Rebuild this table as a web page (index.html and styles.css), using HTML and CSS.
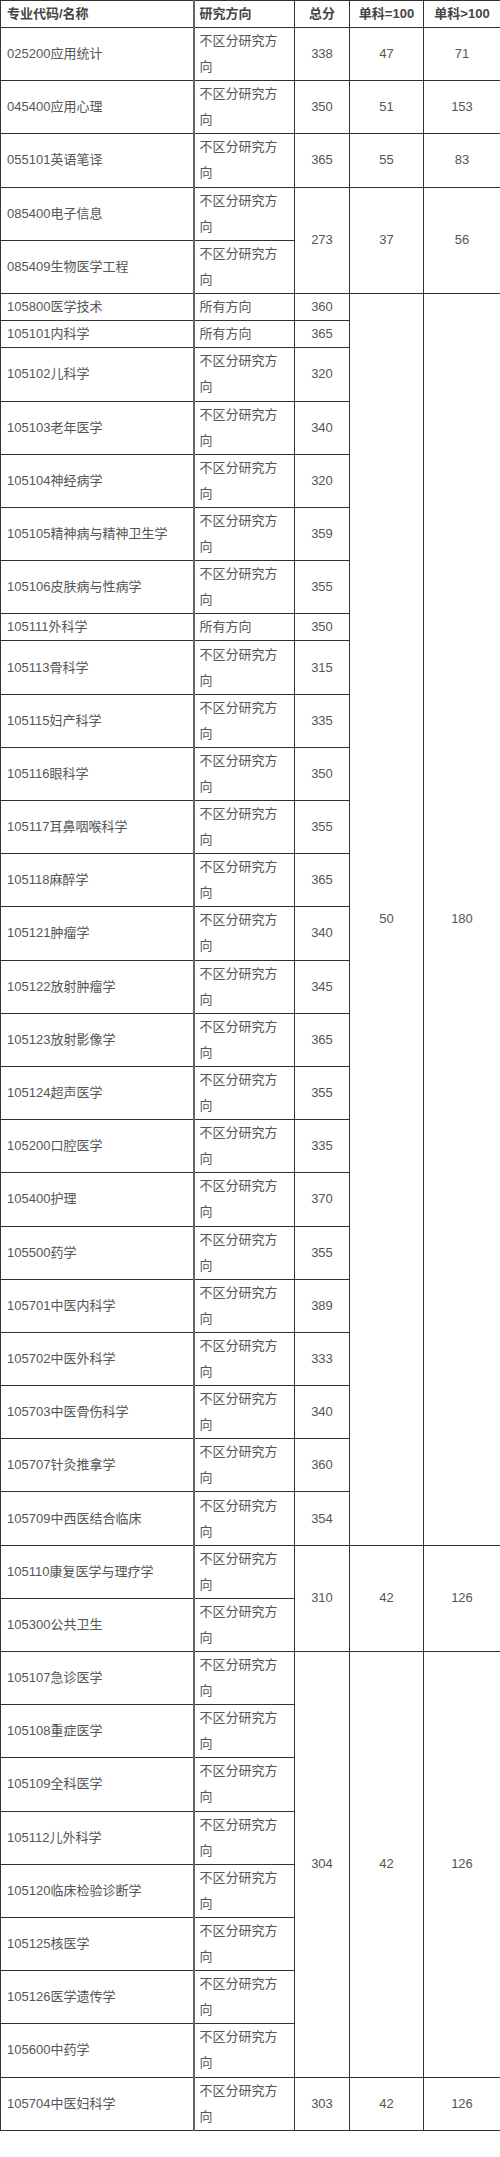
FILE: index.html
```html
<!DOCTYPE html>
<html lang="zh-CN">
<head>
<meta charset="utf-8">
<title>分数线</title>
<link rel="stylesheet" href="styles.css">
</head>
<body>
<table class="score-table">
  <colgroup>
    <col class="c-name">
    <col class="c-dir">
    <col class="c-total">
    <col class="c-eq">
    <col class="c-gt">
  </colgroup>
  <thead>
    <tr>
      <th class="left">专业代码/名称</th>
      <th class="left dir">研究方向</th>
      <th>总分</th>
      <th>单科=100</th>
      <th>单科&gt;100</th>
    </tr>
  </thead>
  <tbody>
    <tr><td class="name">025200应用统计</td><td class="dir">不区分研究方向</td><td class="num">338</td><td class="num">47</td><td class="num">71</td></tr>
    <tr><td class="name">045400应用心理</td><td class="dir">不区分研究方向</td><td class="num">350</td><td class="num">51</td><td class="num">153</td></tr>
    <tr><td class="name">055101英语笔译</td><td class="dir">不区分研究方向</td><td class="num">365</td><td class="num">55</td><td class="num">83</td></tr>
    <tr><td class="name">085400电子信息</td><td class="dir">不区分研究方向</td><td class="num" rowspan="2">273</td><td class="num" rowspan="2">37</td><td class="num" rowspan="2">56</td></tr>
    <tr><td class="name">085409生物医学工程</td><td class="dir">不区分研究方向</td></tr>
    <tr><td class="name">105800医学技术</td><td class="dir">所有方向</td><td class="num">360</td><td class="num" rowspan="25">50</td><td class="num" rowspan="25">180</td></tr>
    <tr><td class="name">105101内科学</td><td class="dir">所有方向</td><td class="num">365</td></tr>
    <tr><td class="name">105102儿科学</td><td class="dir">不区分研究方向</td><td class="num">320</td></tr>
    <tr><td class="name">105103老年医学</td><td class="dir">不区分研究方向</td><td class="num">340</td></tr>
    <tr><td class="name">105104神经病学</td><td class="dir">不区分研究方向</td><td class="num">320</td></tr>
    <tr><td class="name">105105精神病与精神卫生学</td><td class="dir">不区分研究方向</td><td class="num">359</td></tr>
    <tr><td class="name">105106皮肤病与性病学</td><td class="dir">不区分研究方向</td><td class="num">355</td></tr>
    <tr><td class="name">105111外科学</td><td class="dir">所有方向</td><td class="num">350</td></tr>
    <tr><td class="name">105113骨科学</td><td class="dir">不区分研究方向</td><td class="num">315</td></tr>
    <tr><td class="name">105115妇产科学</td><td class="dir">不区分研究方向</td><td class="num">335</td></tr>
    <tr><td class="name">105116眼科学</td><td class="dir">不区分研究方向</td><td class="num">350</td></tr>
    <tr><td class="name">105117耳鼻咽喉科学</td><td class="dir">不区分研究方向</td><td class="num">355</td></tr>
    <tr><td class="name">105118麻醉学</td><td class="dir">不区分研究方向</td><td class="num">365</td></tr>
    <tr><td class="name">105121肿瘤学</td><td class="dir">不区分研究方向</td><td class="num">340</td></tr>
    <tr><td class="name">105122放射肿瘤学</td><td class="dir">不区分研究方向</td><td class="num">345</td></tr>
    <tr><td class="name">105123放射影像学</td><td class="dir">不区分研究方向</td><td class="num">365</td></tr>
    <tr><td class="name">105124超声医学</td><td class="dir">不区分研究方向</td><td class="num">355</td></tr>
    <tr><td class="name">105200口腔医学</td><td class="dir">不区分研究方向</td><td class="num">335</td></tr>
    <tr><td class="name">105400护理</td><td class="dir">不区分研究方向</td><td class="num">370</td></tr>
    <tr><td class="name">105500药学</td><td class="dir">不区分研究方向</td><td class="num">355</td></tr>
    <tr><td class="name">105701中医内科学</td><td class="dir">不区分研究方向</td><td class="num">389</td></tr>
    <tr><td class="name">105702中医外科学</td><td class="dir">不区分研究方向</td><td class="num">333</td></tr>
    <tr><td class="name">105703中医骨伤科学</td><td class="dir">不区分研究方向</td><td class="num">340</td></tr>
    <tr><td class="name">105707针灸推拿学</td><td class="dir">不区分研究方向</td><td class="num">360</td></tr>
    <tr><td class="name">105709中西医结合临床</td><td class="dir">不区分研究方向</td><td class="num">354</td></tr>
    <tr><td class="name">105110康复医学与理疗学</td><td class="dir">不区分研究方向</td><td class="num" rowspan="2">310</td><td class="num" rowspan="2">42</td><td class="num" rowspan="2">126</td></tr>
    <tr><td class="name">105300公共卫生</td><td class="dir">不区分研究方向</td></tr>
    <tr><td class="name">105107急诊医学</td><td class="dir">不区分研究方向</td><td class="num" rowspan="8">304</td><td class="num" rowspan="8">42</td><td class="num" rowspan="8">126</td></tr>
    <tr><td class="name">105108重症医学</td><td class="dir">不区分研究方向</td></tr>
    <tr><td class="name">105109全科医学</td><td class="dir">不区分研究方向</td></tr>
    <tr><td class="name">105112儿外科学</td><td class="dir">不区分研究方向</td></tr>
    <tr><td class="name">105120临床检验诊断学</td><td class="dir">不区分研究方向</td></tr>
    <tr><td class="name">105125核医学</td><td class="dir">不区分研究方向</td></tr>
    <tr><td class="name">105126医学遗传学</td><td class="dir">不区分研究方向</td></tr>
    <tr><td class="name">105600中药学</td><td class="dir">不区分研究方向</td></tr>
    <tr><td class="name">105704中医妇科学</td><td class="dir">不区分研究方向</td><td class="num">303</td><td class="num">42</td><td class="num">126</td></tr>
  </tbody>
</table>
</body>
</html>
```

FILE: styles.css
```css
html, body {
  margin: 0;
  padding: 0;
  background: #ffffff;
}

.score-table {
  width: 500px;
  table-layout: fixed;
  border-collapse: collapse;
  font-family: "Liberation Sans", "Noto Sans CJK SC", sans-serif;
  font-size: 13px;
  color: #555555;
}

.c-name { width: 193px; }
.c-dir { width: 101px; }
.c-total { width: 55px; }
.c-eq { width: 74px; }
.c-gt { width: 77px; }

.score-table th,
.score-table td {
  border: 1px solid #333333;
  line-height: 26px;
  padding: 0.1px 5px;
  vertical-align: middle;
  text-align: center;
}

.score-table th {
  font-weight: bold;
  color: #444444;
  padding-top: 0;
  padding-bottom: 0;
}

.score-table th.left,
.score-table td.name,
.score-table td.dir {
  text-align: left;
}

.score-table td.name,
.score-table th.left:first-child {
  padding-left: 6px;
  border-right: 2px solid #666666;
}

.score-table td.dir,
.score-table th.dir {
  padding-left: 5px;
  padding-right: 6px;
}
```
